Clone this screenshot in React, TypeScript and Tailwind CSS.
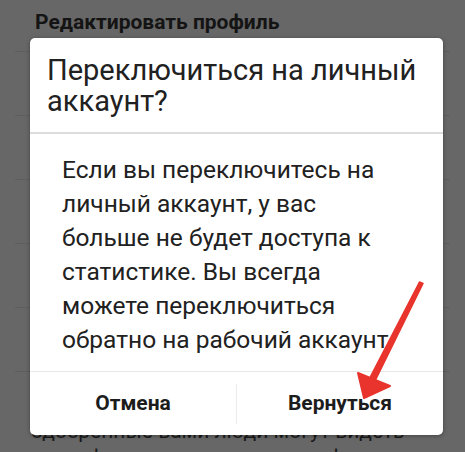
import React from "react";

const bodyLines = [
  "Если вы переключитесь на",
  "личный аккаунт, у вас",
  "больше не будет доступа к",
  "статистике. Вы всегда",
  "можете переключиться",
  "обратно на рабочий аккаунт",
];

export default function App() {
  return (
    <div
      className="relative w-[465px] h-[452px] overflow-hidden bg-[#676767]"
      style={{ fontFamily: "Roboto, 'Noto Sans', sans-serif" }}
    >
      {/* settings page behind the dimmed overlay */}
      <div className="flex flex-col">
        <div className="mx-[15px] h-[52px] border-b border-[#5e5e5e] pl-[20px] pt-[9px]">
          <span className="text-[21px] leading-[26px] font-bold text-[#141414]">
            Редактировать профиль
          </span>
        </div>
        {[0, 1, 2, 3, 4].map((i) => (
          <div key={i} className="mx-[15px] h-[64px] border-b border-[#5e5e5e]" />
        ))}
        <div className="pl-[31px] pt-[46px] text-[21px] leading-[26px] text-[#1a1a1a] whitespace-nowrap">
          <div>одобренные вами люди могут видеть</div>
          <div>ваши фото и видео в разделе фото</div>
        </div>
      </div>

      {/* confirmation dialog */}
      <div className="absolute left-[30px] top-[38px] w-[413px] h-[397px] bg-white rounded-[5px] shadow-[0_1px_4px_rgba(0,0,0,0.35)] flex flex-col">
        <div className="h-[94px] px-[17px] pt-[17px]">
          <div className="text-[29px] leading-[31px] text-[#212121] whitespace-nowrap">
            Переключиться на личный
            <br />
            аккаунт?
          </div>
        </div>
        <div className="h-[2px] bg-[#dcdcdc]" />
        <div className="h-[237px] pl-[32px] pt-[19px] text-[24.5px] leading-[34px] text-[#212121]">
          {bodyLines.map((l) => (
            <div key={l} className="whitespace-nowrap">
              {l}
            </div>
          ))}
        </div>
        <div className="h-px bg-[#e8e8e8]" />
        <div className="flex-1 flex items-center">
          <div className="flex-1 flex justify-center text-[21px] font-bold text-[#1c1c1c]">
            Отмена
          </div>
          <div className="w-px h-[40px] bg-[#ececec]" />
          <div className="flex-1 flex justify-center text-[21px] font-bold text-[#1c1c1c]">
            Вернуться
          </div>
        </div>
      </div>

      {/* red pointer arrow */}
      <svg
        className="absolute left-0 top-0 pointer-events-none"
        width="465"
        height="452"
        viewBox="0 0 465 452"
      >
        <path
          d="M419.5 282 L423 283.5 L375.5 380 L370 377.5 Z"
          fill="#e8342c"
          stroke="#e8342c"
          strokeWidth="1.5"
          strokeLinejoin="round"
        />
        <polygon
          points="358,373 390,386 364,398"
          fill="#e8342c"
          stroke="#e8342c"
          strokeWidth="2"
          strokeLinejoin="round"
        />
      </svg>
    </div>
  );
}
